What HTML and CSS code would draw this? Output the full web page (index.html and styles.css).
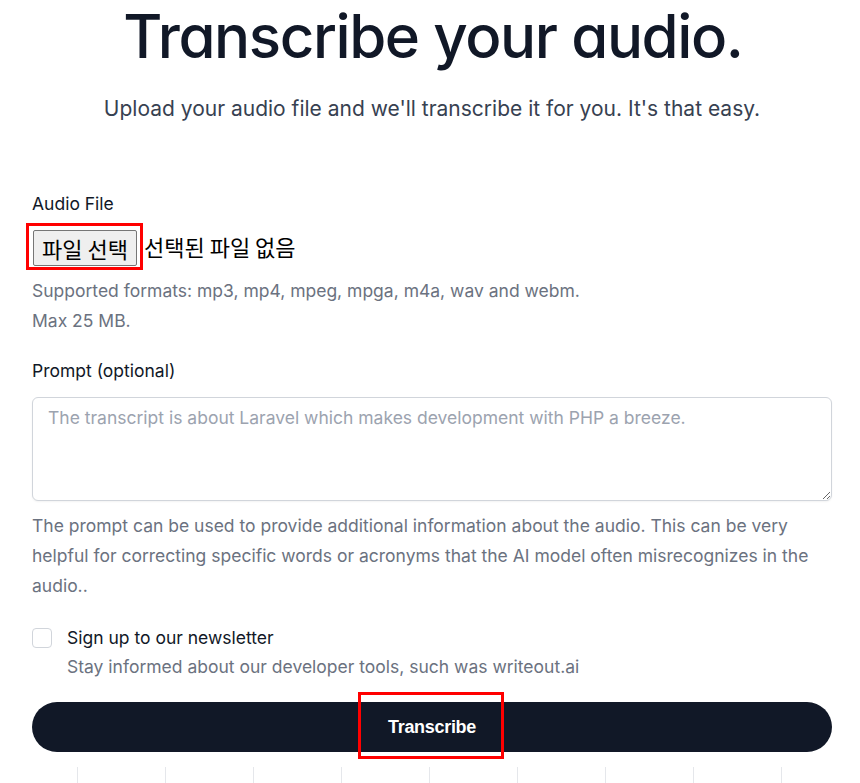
FILE: index.html
```html
<!DOCTYPE html>
<html lang="en">
<head>
<meta charset="utf-8">
<title>Transcribe your audio</title>
<link rel="stylesheet" href="styles.css">
</head>
<body>
<main class="page">
  <h1 class="title">Transcribe your audio.</h1>
  <p class="lead">Upload your audio file and we'll transcribe it for you. It's that easy.</p>

  <form class="form">
    <div class="field">
      <label class="label">Audio File</label>
      <div class="file-row">
        <span class="mark"><span class="file-btn">파일 선택</span></span><span class="file-none">선택된 파일 없음</span>
      </div>
      <p class="help help-file">Supported formats: mp3, mp4, mpeg, mpga, m4a, wav and webm.<br>Max 25 MB.</p>
    </div>

    <div class="field field-prompt">
      <label class="label" for="prompt">Prompt (optional)</label>
      <textarea id="prompt" class="textarea" placeholder="The transcript is about Laravel which makes development with PHP a breeze."></textarea>
      <p class="help help-prompt">The prompt can be used to provide additional information about the audio. This can be very helpful for correcting specific words or acronyms that the AI model often misrecognizes in the audio..</p>
    </div>

    <div class="check-row">
      <span class="checkbox"></span>
      <div class="check-text">
        <div class="check-label">Sign up to our newsletter</div>
        <div class="check-sub">Stay informed about our developer tools, such was writeout.ai</div>
      </div>
    </div>

    <div class="submit-wrap">
      <button type="button" class="submit">Transcribe</button>
      <span class="submit-mark"></span>
    </div>
  </form>

  <div class="lines">
    <span></span><span></span><span></span><span></span><span></span><span></span><span></span><span></span><span></span>
  </div>
</main>
</body>
</html>
```

FILE: styles.css
```css
* { box-sizing: border-box; }
html, body { margin: 0; padding: 0; background: #ffffff; }
body {
  font-family: Inter, "Noto Sans", sans-serif;
  color: #111827;
  overflow: hidden;
}
.page {
  width: 860px;
  height: 783px;
  padding-top: 6px;
  overflow: hidden;
}
.title {
  margin: 0;
  font-size: 60px;
  line-height: 60px;
  font-weight: 500;
  text-align: center;
  letter-spacing: -1.4px;
  padding-left: 6px;
  font-feature-settings: "cv11" 1;
  color: #111827;
}
.lead {
  margin: 27px 0 0;
  font-size: 21px;
  line-height: 32px;
  text-align: center;
  color: #374151;
  padding-left: 4px;
}
.form {
  margin: 65px 0 0 32px;
  width: 800px;
}
.label {
  display: block;
  font-size: 17.5px;
  line-height: 28px;
  font-weight: 400;
  color: #111827;
}
.file-row {
  margin-top: 4px;
  display: flex;
  align-items: center;
  height: 48px;
  margin-left: -6px;
  font-family: "Noto Sans CJK KR", sans-serif;
  font-size: 22px;
  color: #000;
}
.mark {
  display: inline-flex;
  border: 3px solid #ff0000;
  padding: 4px 3px 1px 4px;
}
.file-btn {
  display: inline-flex;
  align-items: center;
  justify-content: center;
  width: 104px;
  height: 36px;
  background: #efefef;
  border: 1px solid #767676;
  border-radius: 2px;
  font-size: 22px;
  color: #000;
}
.file-none { margin-left: 1px; }
.help {
  margin: 0;
  font-size: 17.5px;
  line-height: 29.5px;
  color: #6b7280;
}
.help-file { margin-top: 6px; }
.field-prompt { margin-top: 22px; }
.textarea {
  display: block;
  margin-top: 12px;
  width: 800px;
  height: 104px;
  border: 1px solid #d1d5db;
  border-radius: 6px;
  padding: 7px 15px;
  font-family: Inter, sans-serif;
  font-size: 17.5px;
  line-height: 26px;
  color: #111827;
  resize: vertical;
  box-shadow: 0 1px 2px rgba(0,0,0,0.05);
}
.textarea::placeholder { color: #9ca3af; }
.help-prompt { margin-top: 10px; line-height: 30px; }
.check-row {
  display: flex;
  align-items: flex-start;
  margin-top: 23px;
}
.checkbox {
  width: 20px;
  height: 20px;
  margin-top: 4px;
  border: 1px solid #d1d5db;
  border-radius: 4px;
  flex: none;
}
.check-text { margin-left: 15px; }
.check-label {
  font-size: 17.5px;
  line-height: 28px;
  color: #111827;
}
.check-sub {
  font-size: 17.5px;
  line-height: 29px;
  color: #6b7280;
}
.submit-wrap {
  position: relative;
  margin-top: 21px;
}
.submit {
  display: block;
  width: 800px;
  height: 50px;
  border: 0;
  border-radius: 25px;
  background: #111827;
  color: #ffffff;
  font-family: "Liberation Sans", Arial, sans-serif;
  font-weight: 700;
  font-size: 18px;
  letter-spacing: -0.3px;
}
.submit-mark {
  position: absolute;
  left: 326px;
  top: -10px;
  width: 146px;
  height: 67px;
  border: 3px solid #ff0000;
  pointer-events: none;
}
.lines {
  display: flex;
  gap: 87px;
  padding-left: 77px;
  margin-top: 15px;
  height: 20px;
}
.lines span {
  width: 1px;
  height: 20px;
  background: #e5e7eb;
  flex: none;
}
```
